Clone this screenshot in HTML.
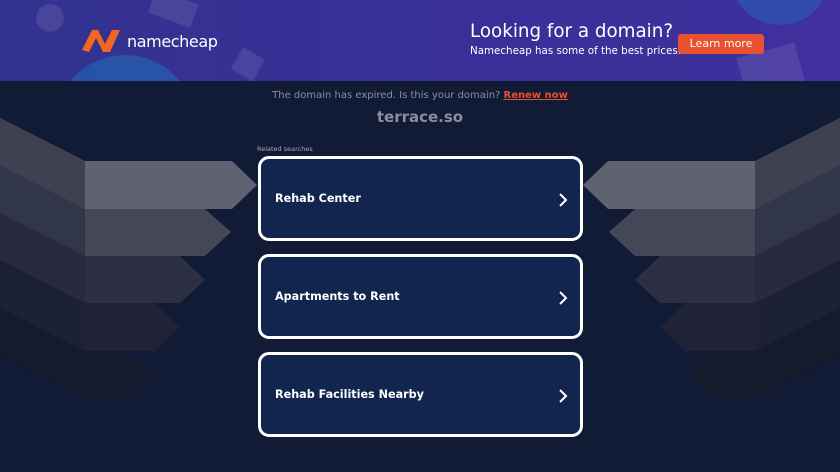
<!DOCTYPE html>
<html><head><meta charset="utf-8"><style>
*{margin:0;padding:0;box-sizing:border-box}
body{width:840px;height:472px;overflow:hidden;background:#111b35;font-family:"DejaVu Sans","Liberation Sans",sans-serif;position:relative}
.banner{position:absolute;left:0;top:0;width:840px;height:81px;background:linear-gradient(90deg,#33328f,#3a2f98 60%,#40309e);overflow:hidden}
.card{position:absolute;left:258px;width:325px;height:85px;border:3px solid #fff;border-radius:11px;background:#12254f;color:#fff;font-weight:bold;font-size:11.2px;padding-left:14px;display:flex;align-items:center}
.card svg{position:absolute;right:12px;top:34px}
</style></head><body>
<svg width="840" height="472" style="position:absolute;left:0;top:0">
<g id="L">
<polygon points="0,308 85,351 127,351 152,374 127,398 85,398 0,355" fill="#161b2e"/>
<polygon points="0,260 85,303 155,303 180,327 155,351 85,351 0,308" fill="#1f2335"/>
<polygon points="0,213 85,256 180,256 205,280 180,303 85,303 0,260" fill="#2d3042"/>
<polygon points="0,165 85,209 205,209 231,232 205,256 85,256 0,213" fill="#434756"/>
<polygon points="0,118 85,161 232,161 257,185 232,209 85,209 0,165" fill="#5f6270"/>
<polygon points="0,118 85,161 85,209 0,165" fill="#3e4150"/>
<polygon points="0,165 85,209 85,256 0,213" fill="#32364a"/>
<polygon points="0,213 85,256 85,303 0,260" fill="#282b3e"/>
<polygon points="0,260 85,303 85,351 0,308" fill="#1d2134"/>
<polygon points="0,308 85,351 85,398 0,355" fill="#151a2d"/>
</g>
<use href="#L" transform="translate(840,0) scale(-1,1)"/>
</svg>
<div class="banner">
<svg width="840" height="81" style="position:absolute;left:0;top:0">
<circle cx="125" cy="125" r="70" fill="#1d6fb8" opacity=".55"/>
<circle cx="780" cy="-25" r="50" fill="#2366b8" opacity=".5"/>
<g fill="#fff" opacity=".1"><rect x="150" y="-5" width="45" height="25" transform="rotate(20 170 10)"/><rect x="235" y="52" width="25" height="25" transform="rotate(30 248 65)"/><rect x="740" y="55" width="60" height="40" transform="rotate(-15 750 70)"/><circle cx="50" cy="18" r="14"/></g>
<path d="M82 50 L92 30 L98 30 L105 44 L112 30 L120 30 L110 52 L103 52 L96 38 L89 52Z" fill="#f26522"/>
</svg>
<div style="position:absolute;left:127px;top:32px;color:#fff;font-size:16px;letter-spacing:-.4px">namecheap</div>
<div style="position:absolute;left:470px;top:21px;color:#fff;font-size:18.3px">Looking for a domain?</div>
<div style="position:absolute;left:470px;top:45px;color:#fff;font-size:10.3px">Namecheap has some of the best prices.</div>
<div style="position:absolute;left:678px;top:34px;width:86px;height:20px;background:#e8502f;border-radius:3px;color:#fff;font-size:11px;text-align:center;line-height:20px">Learn more</div>
</div>
<div style="position:absolute;left:0;width:840px;top:90px;text-align:center;color:#8a8f9c;font-size:10px">The domain has expired. Is this your domain? <span style="color:#e8502f;font-weight:bold;text-decoration:underline">Renew now</span></div>
<div style="position:absolute;left:0;width:840px;top:108px;text-align:center;color:#8a8f9c;font-size:15px;font-weight:bold">terrace.so</div>
<div style="position:absolute;left:257px;top:145px;color:#a5a9b3;font-size:6.5px">Related searches</div>
<div class="card" style="top:156px">Rehab Center<svg width="10" height="14"><path d="M2 1l6 6-6 6" stroke="#fff" stroke-width="2" fill="none"/></svg></div>
<div class="card" style="top:254px">Apartments to Rent<svg width="10" height="14"><path d="M2 1l6 6-6 6" stroke="#fff" stroke-width="2" fill="none"/></svg></div>
<div class="card" style="top:352px">Rehab Facilities Nearby<svg width="10" height="14"><path d="M2 1l6 6-6 6" stroke="#fff" stroke-width="2" fill="none"/></svg></div>
</body></html>
